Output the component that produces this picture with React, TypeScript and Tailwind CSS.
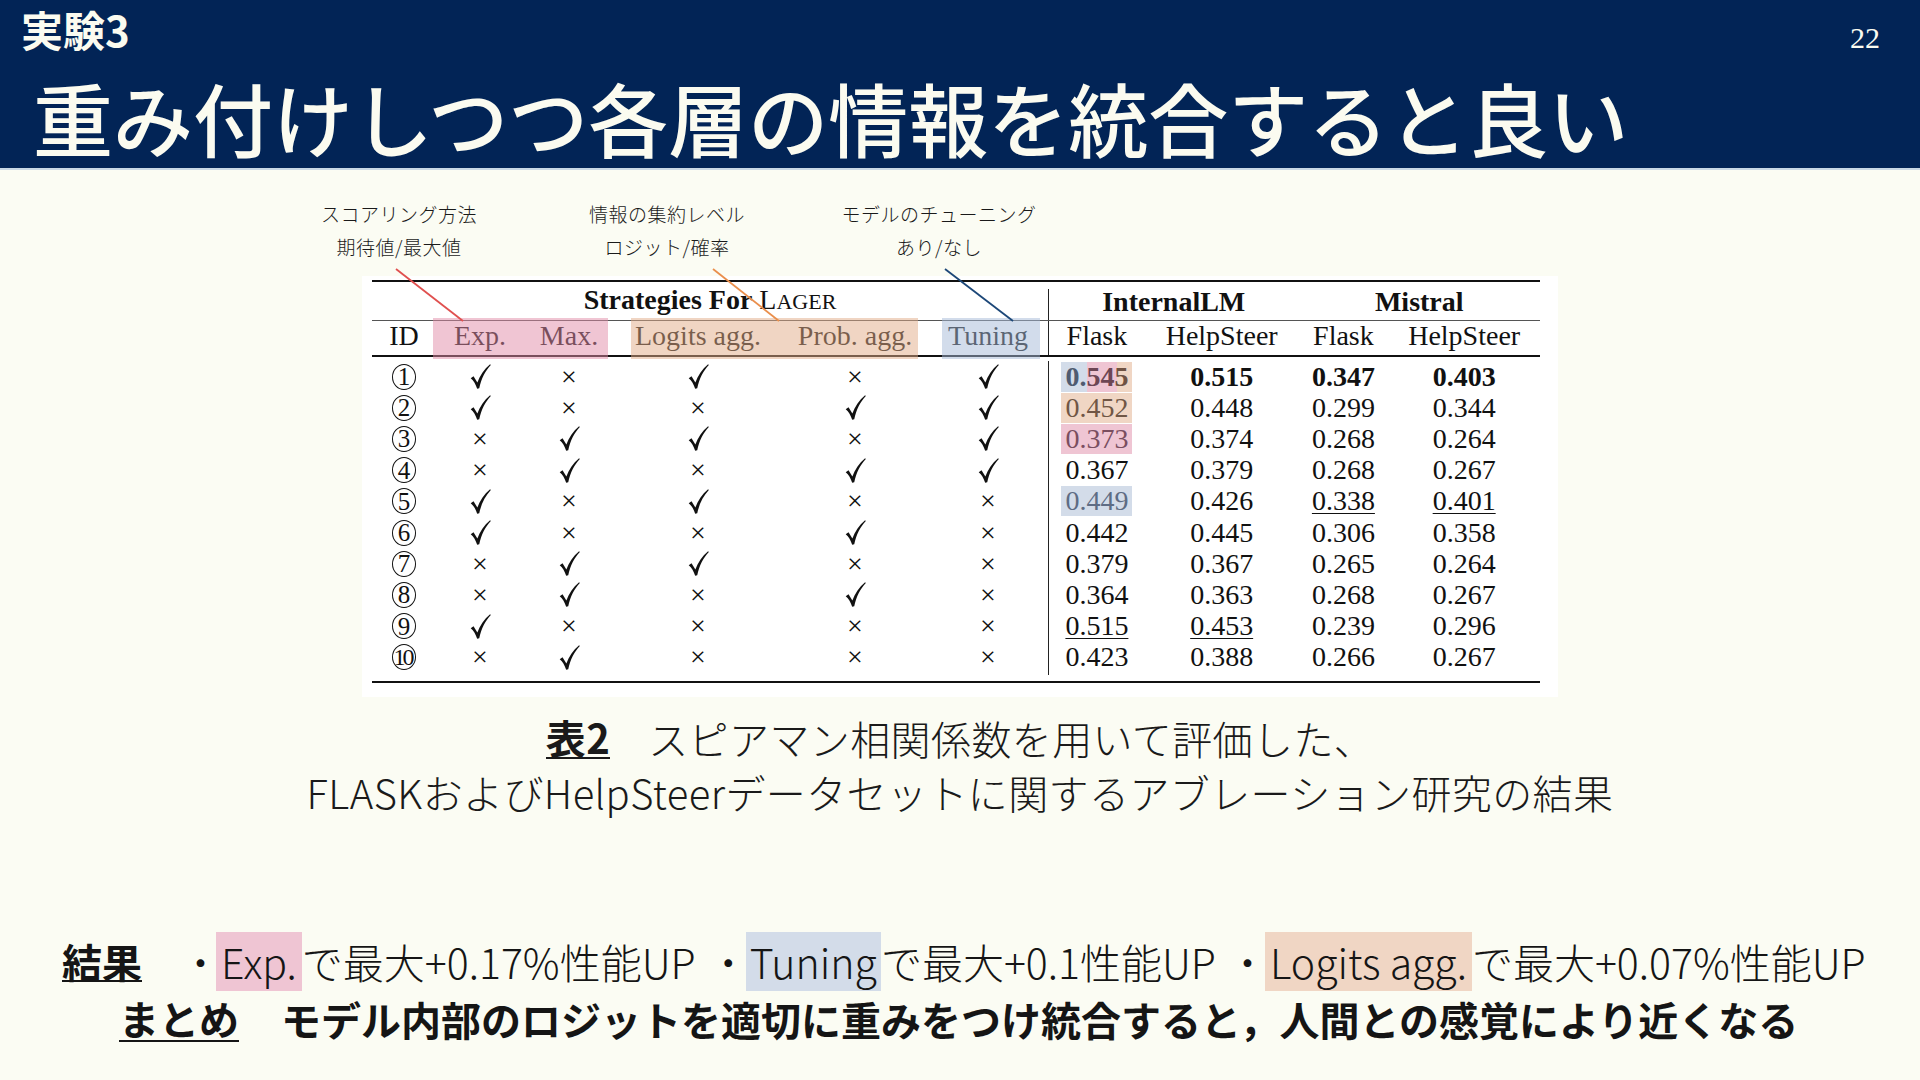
import React from "react";

const Check = () => (
  <svg width="21" height="25" viewBox="0 0 20 24" className="block">
    <path
      d="M0.6 13.6 L3.3 11.8 L7.0 17.8 C9.4 11.3 13.3 5.2 19.2 0.3 L19.9 1.0 C14.7 6.6 10.8 13.8 8.8 23.3 L6.8 23.7 C5.5 19.6 3.5 16.0 0.6 13.6 Z"
      fill="#111"
    />
  </svg>
);

const Cross = () => <span className="text-[28px] leading-none">×</span>;

const Circ = ({ n }: { n: number }) => (
  <div className="w-[24px] h-[26px] rounded-[50%] border border-[#111] flex items-center justify-center overflow-visible">
    {n === 10 ? (
      <span className="text-[24px] leading-none tracking-[-3px] pr-[3px]">10</span>
    ) : (
      <span className="text-[25px] leading-none">{n}</span>
    )}
  </div>
);

const LW = ["w-[64px]", "w-[88px]", "w-[90px]", "w-[168px]", "w-[146px]", "w-[120px]"];
const RW = ["w-[96px]", "w-[154px]", "w-[90px]", "w-[152px]"];

type Row = {
  m: number[];
  v: string[];
  bold?: boolean;
  u?: number[];
  hl?: string;
};

const rows: Row[] = [
  { m: [1, 0, 1, 0, 1], v: ["0.545", "0.515", "0.347", "0.403"], bold: true, hl: "tri" },
  { m: [1, 0, 0, 1, 1], v: ["0.452", "0.448", "0.299", "0.344"], hl: "o" },
  { m: [0, 1, 1, 0, 1], v: ["0.373", "0.374", "0.268", "0.264"], hl: "p" },
  { m: [0, 1, 0, 1, 1], v: ["0.367", "0.379", "0.268", "0.267"] },
  { m: [1, 0, 1, 0, 0], v: ["0.449", "0.426", "0.338", "0.401"], hl: "b", u: [2, 3] },
  { m: [1, 0, 0, 1, 0], v: ["0.442", "0.445", "0.306", "0.358"] },
  { m: [0, 1, 1, 0, 0], v: ["0.379", "0.367", "0.265", "0.264"] },
  { m: [0, 1, 0, 1, 0], v: ["0.364", "0.363", "0.268", "0.267"] },
  { m: [1, 0, 0, 0, 0], v: ["0.515", "0.453", "0.239", "0.296"], u: [0, 1] },
  { m: [0, 1, 0, 0, 0], v: ["0.423", "0.388", "0.266", "0.267"] },
];

function FirstCell({ r }: { r: Row }) {
  const v = r.v[0];
  if (r.hl === "tri") {
    return (
      <span className="h-[30px] px-[4px] flex items-center font-bold bg-[linear-gradient(to_right,#d3dce9_0_26px,#efc5d3_26px_56px,#f0d6c4_56px)]">
        <span className="text-[#4f5b70]">0.</span>
        <span className="text-[#6d4654]">54</span>
        <span className="text-[#6f5242]">5</span>
      </span>
    );
  }
  if (r.hl === "o")
    return <span className="h-[30px] px-[4px] flex items-center bg-[#f0d6c4] text-[#705645]">{v}</span>;
  if (r.hl === "p")
    return <span className="h-[30px] px-[4px] flex items-center bg-[#efc5d3] text-[#7a4e5f]">{v}</span>;
  if (r.hl === "b")
    return <span className="h-[30px] px-[4px] flex items-center bg-[#d3dce9] text-[#5e6c84]">{v}</span>;
  return (
    <span className={(r.bold ? "font-bold " : "") + (r.u && r.u.includes(0) ? "underline decoration-1 underline-offset-[3px]" : "")}>
      {v}
    </span>
  );
}

function Table() {
  return (
    <div className="ml-[362px] mt-[13px] w-[1196px] h-[421px] bg-white relative pl-[10px] pt-[4px] font-['Liberation_Serif',serif] text-[28px] text-[#111]">
      {/* highlight overlays on header */}
      <div className="absolute left-[71px] top-[42px] w-[175px] h-[41px] bg-[rgba(225,140,168,0.5)]" />
      <div className="absolute left-[269px] top-[42px] w-[287px] h-[41px] bg-[rgba(225,172,135,0.5)]" />
      <div className="absolute left-[580px] top-[42px] w-[98px] h-[41px] bg-[rgba(165,185,215,0.5)]" />

      <div className="w-[1168px] border-t-2 border-[#111]" />
      {/* group header */}
      <div className="w-[1168px] h-[39px] flex border-b border-[#555]">
        <div className="w-[676px] flex items-center justify-center leading-none pb-[2px]">
          <span className="font-bold">Strategies For&nbsp;</span>
          <span>
            L<span className="text-[22px]">AGER</span>
          </span>
        </div>
        <div className="w-[492px] pt-[7px]">
          <div className="h-full border-l border-[#222] flex items-center font-bold leading-none pb-[6px]">
            <div className="w-[250px] text-center">InternalLM</div>
            <div className="w-[242px] text-center">Mistral</div>
          </div>
        </div>
      </div>
      {/* header 2 */}
      <div className="w-[1168px] h-[34px] flex leading-none">
        <div className="w-[676px] flex items-center pb-[5px]">
          {["ID", "Exp.", "Max.", "Logits agg.", "Prob. agg.", "Tuning"].map((t, i) => (
            <div key={i} className={LW[i] + " text-center whitespace-nowrap"}>
              {t}
            </div>
          ))}
        </div>
        <div className="w-[492px] flex items-center border-l border-[#222] pb-[5px]">
          {["Flask", "HelpSteer", "Flask", "HelpSteer"].map((t, i) => (
            <div key={i} className={RW[i] + " text-center"}>
              {t}
            </div>
          ))}
        </div>
      </div>
      <div className="w-[1168px] border-t-2 border-[#111]" />
      {/* body */}
      <div className="w-[1168px] flex">
        <div className="w-[676px] pt-[4px] pb-[8px]">
          {rows.map((r, ri) => (
            <div key={ri} className="h-[31.2px] flex items-center">
              <div className={LW[0] + " flex justify-center"}>
                <Circ n={ri + 1} />
              </div>
              {r.m.map((m, i) => (
                <div key={i} className={LW[i + 1] + " flex justify-center items-center"}>
                  {m ? <Check /> : <Cross />}
                </div>
              ))}
            </div>
          ))}
        </div>
        <div className="w-[492px] pt-[4px] pb-[6px]">
          <div className="border-l border-[#222] pb-[2px]">
            {rows.map((r, ri) => (
              <div key={ri} className="h-[31.2px] flex items-center leading-none">
                <div className={RW[0] + " flex justify-center"}>
                  <FirstCell r={r} />
                </div>
                {[1, 2, 3].map((ci) => (
                  <div key={ci} className={RW[ci] + " flex justify-center"}>
                    <span
                      className={
                        (r.bold ? "font-bold " : "") +
                        (r.u && r.u.includes(ci) ? "underline decoration-1 underline-offset-[3px]" : "")
                      }
                    >
                      {r.v[ci]}
                    </span>
                  </div>
                ))}
              </div>
            ))}
          </div>
        </div>
      </div>
      <div className="w-[1168px] border-t-2 border-[#111]" />
    </div>
  );
}

export default function App() {
  return (
    <div className="relative w-[1920px] h-[1080px] overflow-hidden bg-[#fbfcf3] font-['Noto_Sans_CJK_JP',sans-serif] text-[#151515]">
      <header className="h-[170px] bg-[#022456] border-b-2 border-[#c9d9e6] flex justify-between text-[#fbfbf0]">
        <div className="pl-[21px] pt-[4px]">
          <div className="text-[42px] leading-[50px] font-bold">実験3</div>
          <div className="mt-[18px] pl-[12px] text-[80px] leading-[88px] font-medium whitespace-nowrap">
            重み付けしつつ各層の情報を統合すると良い
          </div>
        </div>
        <div className="pr-[40px] pt-[23px] font-['Liberation_Serif',serif] text-[30px] leading-none">22</div>
      </header>

      {/* annotations */}
      <div className="mt-[27px] flex text-[19px] leading-[33px] font-light tracking-[0.5px] text-[#1a1a1a]">
        <div className="ml-[289px] w-[220px] text-center">
          スコアリング方法
          <br />
          期待値/最大値
        </div>
        <div className="ml-[48px] w-[220px] text-center">
          情報の集約レベル
          <br />
          ロジット/確率
        </div>
        <div className="ml-[52px] w-[220px] text-center">
          モデルのチューニング
          <br />
          あり/なし
        </div>
      </div>

      <Table />

      {/* caption */}
      <div className="mt-[13px] text-[40px] tracking-[0.4px] font-light text-[#1a1a1a]">
        <div className="h-[55px] flex items-center justify-center">
          <span className="font-bold leading-[40px] border-b-2 border-[#1a1a1a]">表2</span>
          <span className="ml-[38px]">スピアマン相関係数を用いて評価した、</span>
        </div>
        <div className="h-[55px] leading-[55px] text-center">
          FLASKおよびHelpSteerデータセットに関するアブレーション研究の結果
        </div>
      </div>

      {/* bottom */}
      <div className="mt-[112px]">
        <div className="h-[59px] flex items-center pl-[62px] text-[41px] font-light whitespace-nowrap">
          <span className="text-[40px] font-bold leading-[38px] border-b-2 border-[#151515]">結果</span>
          <span className="ml-[38px] w-[36px]">・</span>
          <span className="h-[59px] flex items-center px-[5px] bg-[#efc5d3]">Exp.</span>
          <span>で最大+0.17%性能UP</span>
          <span className="ml-[12px] w-[38px]">・</span>
          <span className="h-[59px] flex items-center px-[4px] bg-[#d3dce9]">Tuning</span>
          <span>で最大+0.1性能UP</span>
          <span className="ml-[11px] w-[38px]">・</span>
          <span className="h-[59px] flex items-center px-[5px] bg-[#f0d6c4]">Logits agg.</span>
          <span>で最大+0.07%性能UP</span>
        </div>
        <div className="mt-[4px] h-[48px] flex items-center pl-[119px] text-[40px] font-bold whitespace-nowrap">
          <span className="leading-[44px] border-b-2 border-[#151515]">まとめ</span>
          <span className="ml-[42px]">モデル内部のロジットを適切に重みをつけ統合すると，人間との感覚により近くなる</span>
        </div>
      </div>

      {/* annotation leader lines */}
      <svg className="absolute left-0 top-0 pointer-events-none" width="1920" height="1080" viewBox="0 0 1920 1080">
        <line x1="396" y1="269" x2="463" y2="321" stroke="#e0504f" strokeWidth="1.8" />
        <line x1="713" y1="269" x2="779" y2="321" stroke="#ea8f4c" strokeWidth="1.8" />
        <line x1="945" y1="269" x2="1013" y2="321" stroke="#1c4778" strokeWidth="1.8" />
      </svg>
    </div>
  );
}
